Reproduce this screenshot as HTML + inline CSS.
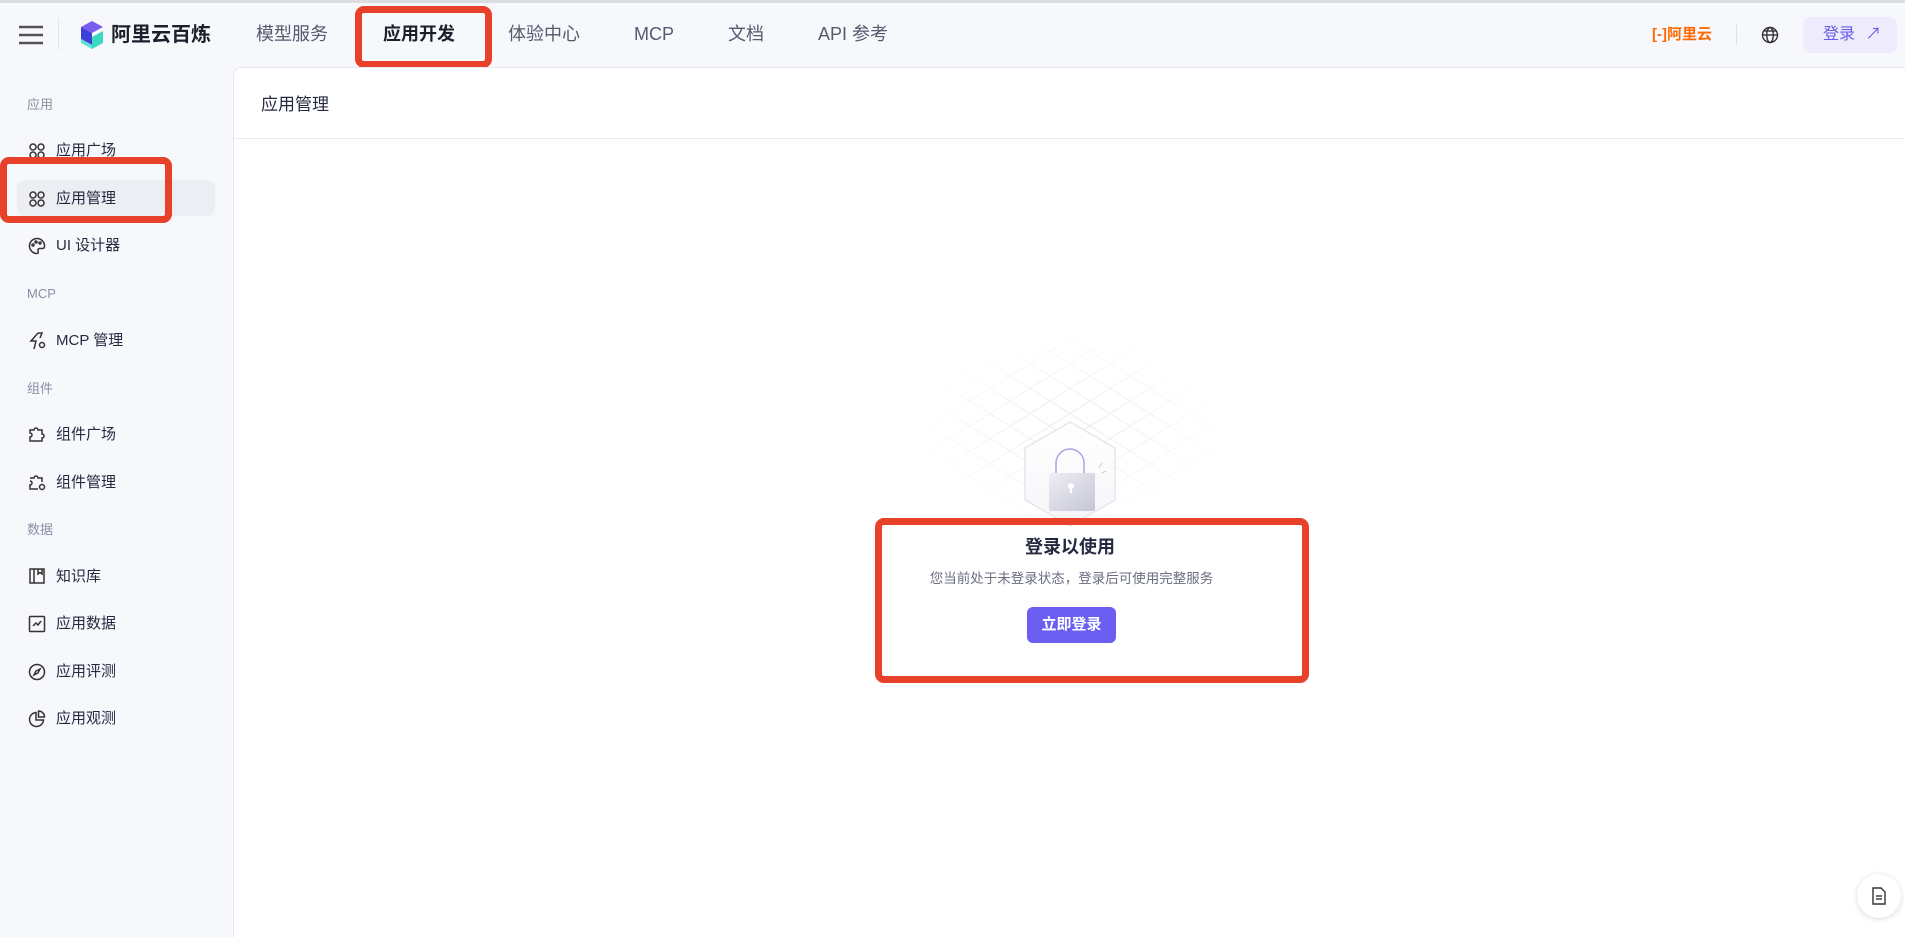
<!DOCTYPE html>
<html><head><meta charset="utf-8"><style>
*{box-sizing:border-box;margin:0;padding:0}
body{width:1905px;height:923px;overflow:hidden;background:#f7f8fc;font-family:"Liberation Sans","Noto Sans CJK SC",sans-serif;color:#262a40;position:relative}
.topline{position:absolute;left:0;top:0;width:1905px;height:3px;background:#dcdde0}
.abs{position:absolute}
.nav{position:absolute;top:22px;font-size:18px;color:#555a6e;line-height:24px}
.side{position:absolute;left:56px;font-size:15px;color:#262a40;line-height:20px}
.lab{position:absolute;left:27px;font-size:13px;color:#8a8fa3;line-height:18px}
.ic{position:absolute;left:28px;width:18px;height:18px}
.red{position:absolute;border:7px solid #e8412a;border-radius:9px}
.s{position:absolute;left:0;top:3px;width:233px;height:760px}
</style></head><body>
<div class="topline"></div>
<svg class="abs" style="left:19px;top:25px" width="24" height="20"><g stroke="#555" stroke-width="2.4"><line x1="0" y1="2" x2="24" y2="2"/><line x1="0" y1="10" x2="24" y2="10"/><line x1="0" y1="18" x2="24" y2="18"/></g></svg>
<div class="abs" style="left:58px;top:18px;width:1px;height:32px;background:#e3e4e8"></div>
<svg class="abs" style="left:79px;top:21px" width="26" height="28" viewBox="0 0 26 28"><path d="M13 0 L24 6 L13 12 L2 6Z" fill="#7b5cf0"/><path d="M2 6 L13 12 L13 24 L2 18Z" fill="#3d3fd8"/><path d="M13 16 L24 10 L24 22 L13 28Z" fill="#3ad8c0"/><path d="M2 18 L13 24 L13 28 L2 22Z" fill="#5fe0d0"/></svg>
<div class="abs" style="left:111px;top:22px;font-size:20px;font-weight:bold;color:#1d1f2c;line-height:26px">阿里云百炼</div>
<div class="nav" style="left:256px">模型服务</div>
<div class="nav" style="left:383px;color:#1d1f2c;font-weight:bold">应用开发</div>
<div class="nav" style="left:508px">体验中心</div>
<div class="nav" style="left:634px">MCP</div>
<div class="nav" style="left:728px">文档</div>
<div class="nav" style="left:818px">API 参考</div>
<div class="red" style="left:355px;top:6px;width:137px;height:62px"></div>
<div class="abs" style="left:1652px;top:25px;font-size:15px;font-weight:bold;color:#ff6a00;line-height:20px">[-]阿里云</div>
<div class="abs" style="left:1736px;top:25px;width:1px;height:20px;background:#e0e1e5"></div>
<svg class="abs" style="left:1761px;top:26px" width="18" height="18" viewBox="0 0 18 18" fill="none" stroke="#333" stroke-width="1.4"><circle cx="9" cy="9" r="7.5"/><ellipse cx="9" cy="9" rx="3.3" ry="7.5"/><line x1="1.5" y1="9" x2="16.5" y2="9"/><line x1="3" y1="5" x2="15" y2="5"/></svg>
<div class="abs" style="left:1803px;top:17px;width:94px;height:36px;border-radius:8px;background:#eeebfd;color:#6b5ce7;font-size:16px;line-height:36px;padding-left:20px">登录 <span style="margin-left:6px">↗</span></div>
<div class="s">
<div class="lab" style="top:93px">应用</div>
<div class="abs" style="left:17px;top:177px;width:198px;height:36px;background:#eceef4;border-radius:8px"></div>
<svg class="ic" style="top:139px" viewBox="0 0 18 18" fill="none" stroke="#333" stroke-width="1.5"><circle cx="5" cy="5" r="3"/><circle cx="13" cy="5" r="3"/><circle cx="5" cy="13" r="3"/><circle cx="13" cy="13" r="3"/></svg>
<div class="side" style="top:138px">应用广场</div>
<svg class="ic" style="top:187px" viewBox="0 0 18 18" fill="none" stroke="#333" stroke-width="1.5"><circle cx="5" cy="5" r="3"/><circle cx="13" cy="5" r="3"/><circle cx="5" cy="13" r="3"/><circle cx="13" cy="13" r="3"/></svg>
<div class="side" style="top:186px">应用管理</div>
<svg class="ic" style="top:234px" viewBox="0 0 18 18" fill="none" stroke="#333" stroke-width="1.5"><path d="M9 1.5a7.5 7.5 0 1 0 0 15c1.5 0 1.5-1.5 1-2.5s0-2.5 2-2.5h2.5c1.5 0 2-1 2-2.5A7.5 7.5 0 0 0 9 1.5z"/><circle cx="5" cy="8" r="1"/><circle cx="8" cy="5" r="1"/><circle cx="12" cy="6" r="1"/></svg>
<div class="side" style="top:233px">UI 设计器</div>
<div class="lab" style="top:282px">MCP</div>
<svg class="ic" style="top:329px" viewBox="0 0 18 18" fill="none" stroke="#333" stroke-width="1.5"><path d="M10 1 L3 9 H8 L6 17"/><path d="M10 1 L14 1 L12 6"/><circle cx="14" cy="13" r="2.5"/></svg>
<div class="side" style="top:328px">MCP 管理</div>
<div class="lab" style="top:377px">组件</div>
<svg class="ic" style="top:422px" viewBox="0 0 18 18" fill="none" stroke="#333" stroke-width="1.5"><path d="M2 5h4a2 2 0 1 1 4 0h4v4a2 2 0 1 1 0 4v3H2v-4a2 2 0 1 0 0-4z"/></svg>
<div class="side" style="top:422px">组件广场</div>
<svg class="ic" style="top:470px" viewBox="0 0 18 18" fill="none" stroke="#333" stroke-width="1.5"><path d="M2 5h4a2 2 0 1 1 4 0h4v4M10 16H2v-4a2 2 0 1 0 0-4"/><circle cx="14" cy="14" r="2.5"/></svg>
<div class="side" style="top:470px">组件管理</div>
<div class="lab" style="top:518px">数据</div>
<svg class="ic" style="top:564px" viewBox="0 0 18 18" fill="none" stroke="#333" stroke-width="1.5"><rect x="2" y="2" width="14" height="14"/><line x1="6" y1="2" x2="6" y2="16"/><path d="M10 2v5l2-1.5 2 1.5V2"/></svg>
<div class="side" style="top:564px">知识库</div>
<svg class="ic" style="top:612px" viewBox="0 0 18 18" fill="none" stroke="#333" stroke-width="1.5"><rect x="1.5" y="1.5" width="15" height="15" rx="1"/><path d="M5 11l3-3 2 2 3-4"/></svg>
<div class="side" style="top:611px">应用数据</div>
<svg class="ic" style="top:660px" viewBox="0 0 18 18" fill="none" stroke="#333" stroke-width="1.5"><circle cx="9" cy="9" r="7.5"/><path d="M12 6l-2 4-4 2 2-4z"/></svg>
<div class="side" style="top:659px">应用评测</div>
<svg class="ic" style="top:707px" viewBox="0 0 18 18" fill="none" stroke="#333" stroke-width="1.5"><path d="M8 2.5a7 7 0 1 0 7.5 7.5H8z"/><path d="M10.5 1v6h6a6 6 0 0 0-6-6z"/></svg>
<div class="side" style="top:706px">应用观测</div>
</div>
<div class="red" style="left:0;top:157px;width:172px;height:66px"></div>
<div class="abs" style="left:233px;top:67px;width:1680px;height:870px;background:#fff;border-left:1px solid #e6e7eb;border-top:1px solid #e6e7eb;border-top-left-radius:8px"></div>
<div class="abs" style="left:261px;top:93px;font-size:17px;color:#262a40;line-height:24px">应用管理</div>
<div class="abs" style="left:234px;top:138px;width:1671px;height:1px;background:#e8e9ec"></div>
<svg class="abs" style="left:910px;top:326px" width="320" height="200" viewBox="0 0 320 200">
<defs><radialGradient id="g"><stop offset="0" stop-color="#fff" stop-opacity="1"/><stop offset="1" stop-color="#fff" stop-opacity="0"/></radialGradient><mask id="m"><rect width="320" height="200" fill="url(#g)"/></mask></defs>
<g mask="url(#m)" stroke="#e8e9ee" stroke-width="1">
<path d="M-100 0 L220 200 M-60 0 L260 200 M-20 0 L300 200 M20 0 L340 200 M60 0 L380 200 M100 0 L420 200 M140 0 L460 200 M-140 0 L180 200 M-180 0 L140 200 M-220 0 L100 200"/>
<path d="M420 0 L100 200 M380 0 L60 200 M340 0 L20 200 M300 0 L-20 200 M260 0 L-60 200 M220 0 L-100 200 M180 0 L-140 200 M460 0 L140 200 M500 0 L180 200 M540 0 L220 200"/>
</g></svg>
<svg class="abs" style="left:1022px;top:420px" width="96" height="110" viewBox="0 0 96 110">
<defs><linearGradient id="hf" x1="0" y1="0" x2="0" y2="1"><stop offset="0" stop-color="#fff"/><stop offset="1" stop-color="#f6f6fa"/></linearGradient><linearGradient id="lk" x1="0" y1="0" x2="1" y2="1"><stop offset="0" stop-color="#eeeef4"/><stop offset="1" stop-color="#c5c6d6"/></linearGradient></defs>
<path d="M48 2 L93 28 L93 80 L48 106 L3 80 L3 28Z" fill="url(#hf)" stroke="#e6e6ec" stroke-width="1.5" stroke-linejoin="round"/>
<path d="M34 55 V43 a14 14 0 0 1 28 0 V55" fill="none" stroke="#a9a4e8" stroke-width="1.5"/>
<rect x="27" y="53" width="46" height="38" rx="2" fill="url(#lk)"/>
<circle cx="49" cy="66" r="3" fill="#fff"/><rect x="48" y="66" width="2" height="7" fill="#fff"/>
<path d="M77 48 l3-5 M80 53 l4-2" stroke="#ccc" stroke-width="1"/>
</svg>
<div class="abs" style="left:0;width:2140px;top:535px;text-align:center;font-size:18px;font-weight:bold;color:#262a40;line-height:24px">登录以使用</div>
<div class="abs" style="left:0;width:2143px;top:570px;text-align:center;font-size:13.5px;color:#6b6f80;line-height:18px">您当前处于未登录状态，登录后可使用完整服务</div>
<div class="abs" style="left:1027px;top:607px;width:89px;height:36px;border-radius:6px;background:#6a5ff0;color:#fff;font-size:15px;font-weight:bold;text-align:center;line-height:36px">立即登录</div>
<div class="red" style="left:875px;top:518px;width:434px;height:165px"></div>
<div class="abs" style="left:1857px;top:874px;width:44px;height:44px;border-radius:50%;background:#fff;box-shadow:0 1px 6px rgba(0,0,0,.15)"></div>
<svg class="abs" style="left:1871px;top:887px" width="16" height="18" viewBox="0 0 16 18" fill="none" stroke="#333" stroke-width="1.4"><path d="M2 1h8l4 4v12H2z"/><line x1="5" y1="9" x2="11" y2="9"/><line x1="5" y1="12" x2="11" y2="12"/></svg>
</body></html>
